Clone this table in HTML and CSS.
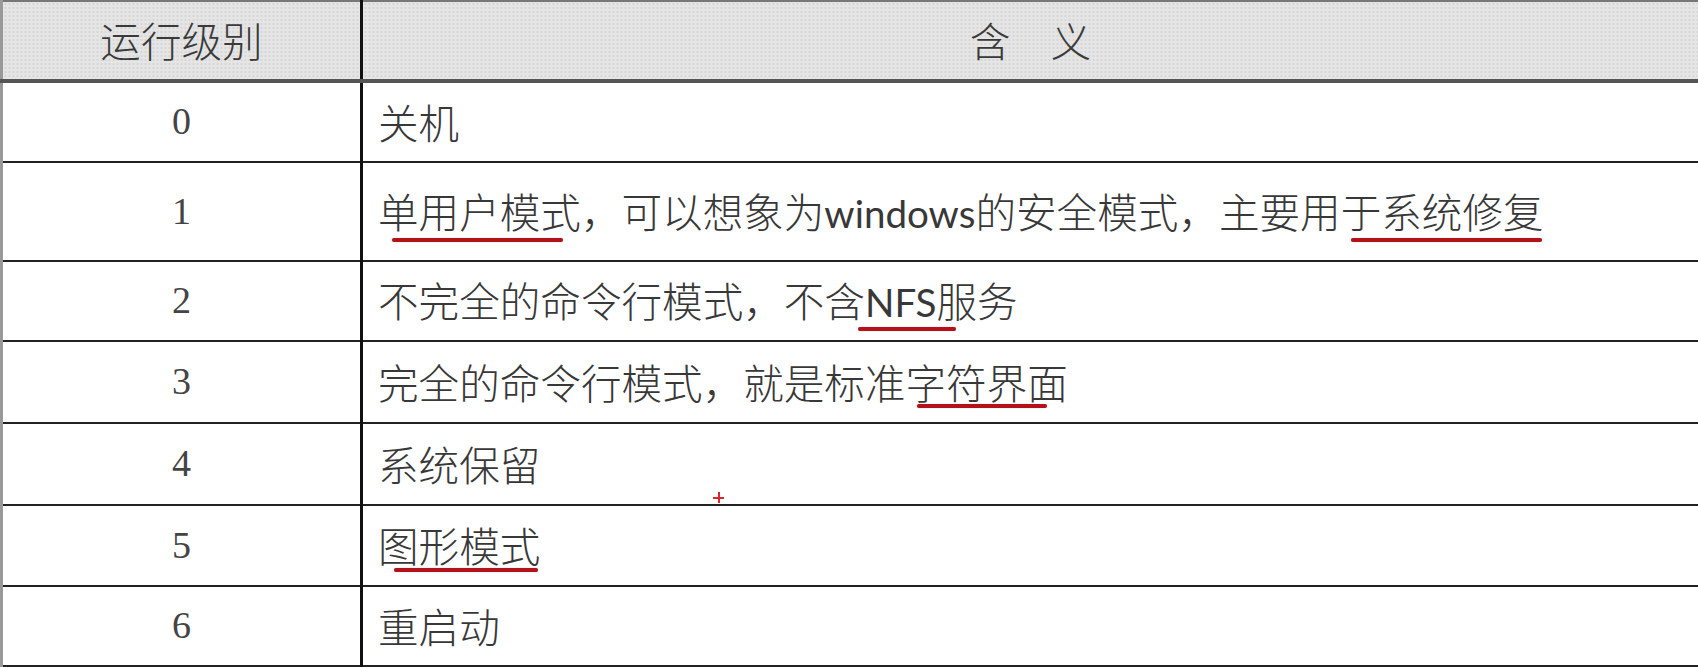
FILE: index.html
```html
<!DOCTYPE html>
<html lang="zh-CN">
<head>
    <meta charset="UTF-8">
    <meta name="viewport" content="width=device-width, initial-scale=1.0">
    <title>运行级别</title>
    <link rel="stylesheet" href="styles.css">
</head>
<body>
    <table class="levels">
        <colgroup>
            <col class="col-level">
            <col class="col-meaning">
        </colgroup>
        <thead>
            <tr class="head-row">
                <th>运行级别</th>
                <th>含&emsp;义</th>
            </tr>
        </thead>
        <tbody>
            <tr class="r0">
                <td class="num">0</td>
                <td class="desc">关机</td>
            </tr>
            <tr class="r1">
                <td class="num">1</td>
                <td class="desc"><span class="mark m-single">单用户模式</span>，可以想象为<span class="latin">windows</span>的安全模式，主要用<span class="mark m-repair">于系统修复</span></td>
            </tr>
            <tr class="r2">
                <td class="num">2</td>
                <td class="desc">不完全的命令行模式，不含<span class="mark m-nfs"><span class="latin">NFS</span>服</span>务</td>
            </tr>
            <tr class="r3">
                <td class="num">3</td>
                <td class="desc">完全的命令行模式，就是标准<span class="mark m-char">字符界面</span></td>
            </tr>
            <tr class="r4">
                <td class="num">4</td>
                <td class="desc">系统保留</td>
            </tr>
            <tr class="r5">
                <td class="num">5</td>
                <td class="desc"><span class="mark m-gui">图形模式</span></td>
            </tr>
            <tr class="r6">
                <td class="num">6</td>
                <td class="desc">重启动</td>
            </tr>
        </tbody>
    </table>
    <div class="cursor"></div>
</body>
</html>
```

FILE: styles.css
```css
body {
    margin: 0;
    background: #fff;
    font-family: "Noto Sans CJK SC", sans-serif;
    color: #383838;
    overflow: hidden;
}
.levels {
    width: 1698px;
    border-collapse: collapse;
    table-layout: fixed;
    border-top: 2px solid #777;
    border-left: 3px solid #999;
}
.col-level {
    width: 360px;
}
.levels th, .levels td {
    padding: 0;
    font-weight: 300;
    font-size: 40.6px;
    line-height: 1.2;
    border-bottom: 2px solid #222;
    border-right: 3px solid #111;
}
.levels th:last-child, .levels td:last-child {
    border-right: none;
}
.levels thead th {
    background-color: #e5e5e5;
    background-image: radial-gradient(#d6d6d6 1px, transparent 1.2px);
    background-size: 4px 4px;
    border-bottom: 4px solid #555;
    text-align: center;
    color: #3a3a3a;
}
.head-row { height: 80px; }
.r0 { height: 81px; }
.r1 { height: 99px; }
.r2 { height: 80px; }
.r3 { height: 82px; }
.r4 { height: 82px; }
.r5 { height: 81px; }
.r6 { height: 80px; }
.num {
    text-align: center;
    font-family: "Liberation Serif", serif;
    font-size: 38px !important;
    color: #444;
}
.desc {
    padding-left: 15px !important;
}
.latin {
    font-family: "Lato", sans-serif;
    font-weight: 400;
    font-size: 0.95em;
}
.mark {
    position: relative;
}
.mark::after {
    content: "";
    position: absolute;
    height: 4px;
    border-radius: 2px;
    background: #b3121a;
    box-shadow: 0 0 1px rgba(180, 20, 26, 0.5);
}
.m-single::after { left: 14px; right: 18px; bottom: -2px; }
.m-repair::after { left: 10px; right: 2px; bottom: -2px; }
.m-nfs::after { left: -7px; right: 21px; bottom: -2px; }
.m-char::after { left: 11px; right: 21px; bottom: 3px; }
.m-gui::after { left: 16px; right: 2px; bottom: 2px; }
.cursor {
    position: absolute;
    left: 713px;
    top: 492px;
    width: 11px;
    height: 11px;
    background:
        linear-gradient(#d9262c, #d9262c) center / 11px 2px no-repeat,
        linear-gradient(#d9262c, #d9262c) center / 2px 11px no-repeat;
}
```
